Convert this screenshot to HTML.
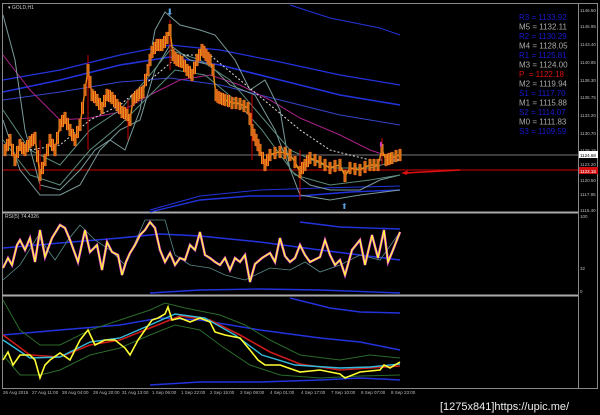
<!DOCTYPE html>
<html><head><style>
html,body{margin:0;padding:0;background:#000;width:600px;height:415px;overflow:hidden}
svg{display:block}
text{font-family:"Liberation Sans",sans-serif}
</style></head><body>
<svg width="600" height="415" viewBox="0 0 600 415">
<defs>
<marker id="cd" markerUnits="userSpaceOnUse" markerWidth="4" markerHeight="14" refX="2" refY="7" orient="0">
<rect x="0.5" y="1" width="3" height="12" fill="#e8901c"/>
<line x1="2" y1="0" x2="2" y2="14" stroke="#c01010" stroke-width="0.6"/>
</marker>
</defs>
<rect width="600" height="415" fill="#000"/>
<rect x="2.5" y="3.5" width="595" height="385" fill="none" stroke="#888" stroke-width="1"/>
<line x1="2" y1="212.5" x2="578" y2="212.5" stroke="#aaa" stroke-width="2"/>
<line x1="2" y1="295.5" x2="578" y2="295.5" stroke="#aaa" stroke-width="2"/>
<line x1="578.5" y1="3" x2="578.5" y2="389" stroke="#888"/>
<text x="8" y="9" font-size="5" fill="#ccc">▾ GOLD,H1</text>
<text x="5" y="218" font-size="5" fill="#ccc">RSI(5) 74.4326</text>

<line x1="3" y1="155" x2="578" y2="155" stroke="#777" stroke-width="1"/>
<line x1="3" y1="170" x2="578" y2="170" stroke="#a00" stroke-width="1.2"/>
<g fill="none" stroke-width="1">
<polyline stroke="#2233dd" stroke-width="1.6" points="3,92 60,80 120,65 170,57 220,65 280,80 340,95 400,105"/>
<polyline stroke="#2233dd" stroke-width="1.2" points="3,80 60,70 120,55 170,45 220,50 280,62 340,75 400,85"/>
<polyline stroke="#3344cc" stroke-width="1" points="3,100 60,92 120,82 170,78 220,85 280,100 340,115 400,125"/>
<polyline stroke="#2233dd" stroke-width="1.4" points="150,212 200,200 250,196 300,196 350,192 400,190"/>
<polyline stroke="#2233dd" stroke-width="1" points="150,210 200,196 260,190 320,188 400,186"/>
<polyline stroke="#2233dd" stroke-width="1" points="290,5 330,18 380,28 400,35"/>
<polyline stroke="#aa2288" points="3,55 30,90 60,120 90,118 120,112 150,95 180,80 210,75 240,85 270,100 300,118 340,135 370,150 400,160"/>
<polyline stroke="#7a9a9a" points="3,15 15,60 25,130 40,185 60,190 80,170 95,150 110,140 125,150 140,110 155,30 165,12 180,25 200,30 215,35 235,60 250,90 265,80 280,110 290,170 310,185 330,190 360,190 380,180 400,175"/>
<polyline stroke="#7a9a9a" points="3,120 20,170 40,195 60,195 80,185 100,150 120,130 140,120 155,70 170,45 190,60 210,65 230,85 255,95 275,130 300,195 330,200 360,195 400,190"/>
<polyline stroke="#5a8a7a" points="3,110 30,150 60,165 90,130 120,110 150,75 170,50 200,60 230,80 260,115 290,150 330,168 370,168 400,160"/>
<polyline stroke="#5a8a7a" points="3,140 30,175 60,185 90,150 120,125 150,95 175,70 205,75 235,100 262,130 295,175 330,185 370,180 400,175"/>
<polyline stroke="#ddd" stroke-dasharray="2,2" points="30,150 60,145 90,120 120,105 150,80 180,55 210,55 240,80 270,105 300,130 330,150 370,160 400,160"/>
</g>
<g stroke="#c00" stroke-width="1">
<line x1="40" y1="140" x2="40" y2="190"/><line x1="88" y1="55" x2="88" y2="150"/>
<line x1="170" y1="20" x2="170" y2="70"/><line x1="300" y1="150" x2="300" y2="200"/>
<line x1="128" y1="100" x2="128" y2="140"/><line x1="252" y1="95" x2="252" y2="160"/>
<line x1="382" y1="138" x2="382" y2="165"/>
</g>
<polyline fill="none" stroke="#e08a1a" stroke-width="1.5" marker-mid="url(#cd)" marker-start="url(#cd)" marker-end="url(#cd)" points="5,150 7.5,145 10,140 12.5,150 15,160 17.5,152 20,145 22.5,148 25,150 27.5,146 30,142 32.5,140 35,138 37.5,156 40,175 42.5,168 45,160 47.5,150 50,140 52.5,145 55,150 57.5,138 60,125 62.5,121 65,118 67.5,124 70,130 72.5,135 75,140 77.5,132 80,125 82.5,108 85,90 88,70 90,82 92,95 94.5,97 97,100 99.5,104 102,108 104.5,101 107,95 109.5,96 112,98 114.5,101 117,105 119.5,108 122,112 124.5,113 127,115 130,120 133,100 135.5,97 138,95 140.5,93 143,92 145.5,80 148,70 150,60 152,52 154.5,48 157,45 159.5,45 162,45 164.5,42 167,38 170,30 173,55 175,58 177,60 179.5,61 182,62 184.5,66 187,70 189.5,72 192,75 194.5,68 197,60 199.5,55 202,50 204,52 206,55 208,58 210,60 213,70 216,95 218,97 220,98 222.5,99 225,100 228.5,101 232,103 236,103 240,104 244,106 248,108 250,119 252,130 254,135 256,140 258,145 260,150 262.5,158 265,165 267.5,160 270,155 275,153 280,152 285,153 290,155 295,162 300,172 302.5,168 305,165 307.5,161 310,158 315,160 320,162 325,165 330,168 335,166 340,165 345,176 350,168 355,169 360,170 365,167 370,165 374,165 378,165 382,150 386,160 389,159 392,158 396,156 400,155"/>
<text x="166" y="15" font-size="9" fill="#5aa0e0">⬇</text>
<text x="341" y="209" font-size="8" fill="#5aa0e0">⬆</text>
<text x="378" y="147" font-size="7" fill="#d040d0">⬇</text>
<line x1="460" y1="170" x2="405" y2="173" stroke="#e01010" stroke-width="1.5"/>
<polygon points="401,173 408,170.5 407,175" fill="#e01010"/>
<g font-size="8">
<text x="519" y="20" fill="#1a1ad0">R3 = 1133.92</text>
<text x="519" y="29.5" fill="#aaa">M5 = 1132.11</text>
<text x="519" y="39" fill="#1a1ad0">R2 = 1130.29</text>
<text x="519" y="48.5" fill="#aaa">M4 = 1128.05</text>
<text x="519" y="58" fill="#1a1ad0">R1 = 1125.81</text>
<text x="519" y="67.5" fill="#aaa">M3 = 1124.00</text>
<text x="519" y="77" fill="#e01010">P&#160;&#160;= 1122.18</text>
<text x="519" y="86.5" fill="#aaa">M2 = 1119.94</text>
<text x="519" y="96" fill="#1a1ad0">S1 = 1117.70</text>
<text x="519" y="105.5" fill="#aaa">M1 = 1115.88</text>
<text x="519" y="115" fill="#1a1ad0">S2 = 1114.07</text>
<text x="519" y="124.5" fill="#aaa">M0 = 1111.83</text>
<text x="519" y="134" fill="#1a1ad0">S3 = 1109.59</text>
</g>
<g font-size="4.5" fill="#bbb">
<text x="580" y="12">1146.50</text><text x="580" y="28">1145.95</text><text x="580" y="46">1143.40</text>
<text x="580" y="64">1140.85</text><text x="580" y="82">1138.30</text><text x="580" y="99">1135.75</text>
<text x="580" y="117">1133.20</text><text x="580" y="135">1130.70</text><text x="580" y="152">1128.15</text>
<text x="580" y="166">1123.20</text><text x="580" y="182">1120.50</text><text x="580" y="196">1117.95</text>
<text x="580" y="212">1115.40</text><text x="580" y="218">100</text><text x="580" y="270">32</text><text x="580" y="293">0</text>
</g>
<rect x="579" y="151" width="19" height="7" fill="#fff"/><text x="580" y="157" font-size="4.5" fill="#000">1124.68</text>
<rect x="579" y="167" width="19" height="7" fill="#d01010"/><text x="580" y="173" font-size="4.5" fill="#fff">1122.18</text>

<g fill="none">
<polyline stroke="#2233dd" stroke-width="1.6" points="3,248 60,243 120,238 160,234 200,236 260,242 320,250 360,255 400,260"/>
<polyline stroke="#2233dd" stroke-width="1.4" points="150,293 200,290 260,289 320,290 400,293"/>
<polyline stroke="#2233dd" stroke-width="1.4" points="300,222 340,227 400,229"/>
<polyline stroke="#5a8a8a" stroke-width="0.8" points="3,280 20,265 38,236 55,260 68,240 80,225 95,240 110,250 125,265 145,220 165,220 175,255 190,265 210,268 225,275 245,280 270,268 290,270 305,262 320,272 340,265 360,255 380,260 400,232"/>
<polyline stroke="#e040e0" stroke-width="2.5" points="3,268 8,258 12,265 17,245 20,240 25,250 30,238 35,262 40,230 45,257 52,238 60,225 65,228 70,240 78,262 85,230 90,252 97,245 102,270 107,242 112,252 118,255 122,275 126,262 130,253 135,245 140,235 145,230 150,222 155,228 160,250 165,262 170,253 175,265 180,258 185,260 190,245 195,250 200,232 205,255 210,258 215,262 220,265 225,258 230,270 235,258 240,262 245,255 250,282 255,264 262,258 270,253 275,262 280,238 285,256 290,262 295,258 300,245 305,255 310,262 320,257 325,240 330,255 335,265 340,260 345,275 352,250 360,240 365,265 372,235 378,258 384,230 388,262 393,250 400,232"/>
<polyline stroke="#ffff33" stroke-width="1.3" points="3,268 8,258 12,265 17,245 20,240 25,250 30,238 35,262 40,230 45,257 52,238 60,225 65,228 70,240 78,262 85,230 90,252 97,245 102,270 107,242 112,252 118,255 122,275 126,262 130,253 135,245 140,235 145,230 150,222 155,228 160,250 165,262 170,253 175,265 180,258 185,260 190,245 195,250 200,232 205,255 210,258 215,262 220,265 225,258 230,270 235,258 240,262 245,255 250,282 255,264 262,258 270,253 275,262 280,238 285,256 290,262 295,258 300,245 305,255 310,262 320,257 325,240 330,255 335,265 340,260 345,275 352,250 360,240 365,265 372,235 378,258 384,230 388,262 393,250 400,232"/>
</g>

<g fill="none">
<polyline stroke="#2233dd" stroke-width="1.5" points="3,335 60,330 120,325 160,318 200,320 260,330 320,338 360,342 400,350"/>
<polyline stroke="#2233dd" stroke-width="1.5" points="290,298 330,308 360,312 400,313"/>
<polyline stroke="#2233dd" stroke-width="1.5" points="150,385 200,382 260,382 320,380 360,378 400,380"/>
<polyline stroke="#2a6a2a" stroke-width="1" points="3,300 20,330 40,345 60,345 90,330 120,320 150,310 165,303 185,308 220,315 245,325 270,340 300,355 340,360 370,355 400,358"/>
<polyline stroke="#2a6a2a" stroke-width="1" points="3,355 20,375 40,375 60,370 90,355 120,348 150,335 175,325 200,330 220,345 250,365 280,375 320,378 360,376 400,375"/>
<polyline stroke="#cc1a1a" stroke-width="1.6" points="3,335 30,355 60,357 90,345 120,340 150,328 180,316 210,320 240,335 270,352 300,364 340,370 370,368 400,366"/>
<polyline stroke="#33bbdd" stroke-width="1.4" points="3,340 30,358 60,357 90,342 120,338 150,325 175,314 205,318 235,335 262,355 295,365 340,368 370,367 400,364"/>
<polyline stroke="#ffff33" stroke-width="1.6" points="3,360 8,352 13,365 20,355 30,355 35,360 40,378 45,365 50,360 60,353 70,360 80,340 88,330 95,345 105,340 115,340 125,348 130,355 138,340 145,330 152,320 158,318 165,314 168,307 172,320 180,318 190,322 200,318 210,322 215,332 225,335 240,338 250,350 258,360 265,365 280,365 300,372 320,370 340,374 345,378 360,372 380,370 384,365 390,368 400,362"/>
</g>

<g font-size="4.5" fill="#bbb">
<text x="3" y="394">26 Aug 2015</text><text x="32" y="394">27 Aug 11:00</text><text x="62" y="394">28 Aug 04:00</text>
<text x="93" y="394">28 Aug 20:00</text><text x="122" y="394">31 Aug 13:00</text><text x="152" y="394">1 Sep 06:00</text>
<text x="181" y="394">1 Sep 22:00</text><text x="210" y="394">2 Sep 15:00</text><text x="240" y="394">3 Sep 08:00</text>
<text x="270" y="394">4 Sep 01:00</text><text x="301" y="394">4 Sep 17:00</text><text x="331" y="394">7 Sep 10:00</text>
<text x="361" y="394">8 Sep 07:00</text><text x="391" y="394">8 Sep 23:00</text>
</g>
<text x="440" y="410" font-size="11" fill="#eee" font-family="Liberation Mono, monospace">[1275x841]https://upic.me/</text>
</svg>
</body></html>
